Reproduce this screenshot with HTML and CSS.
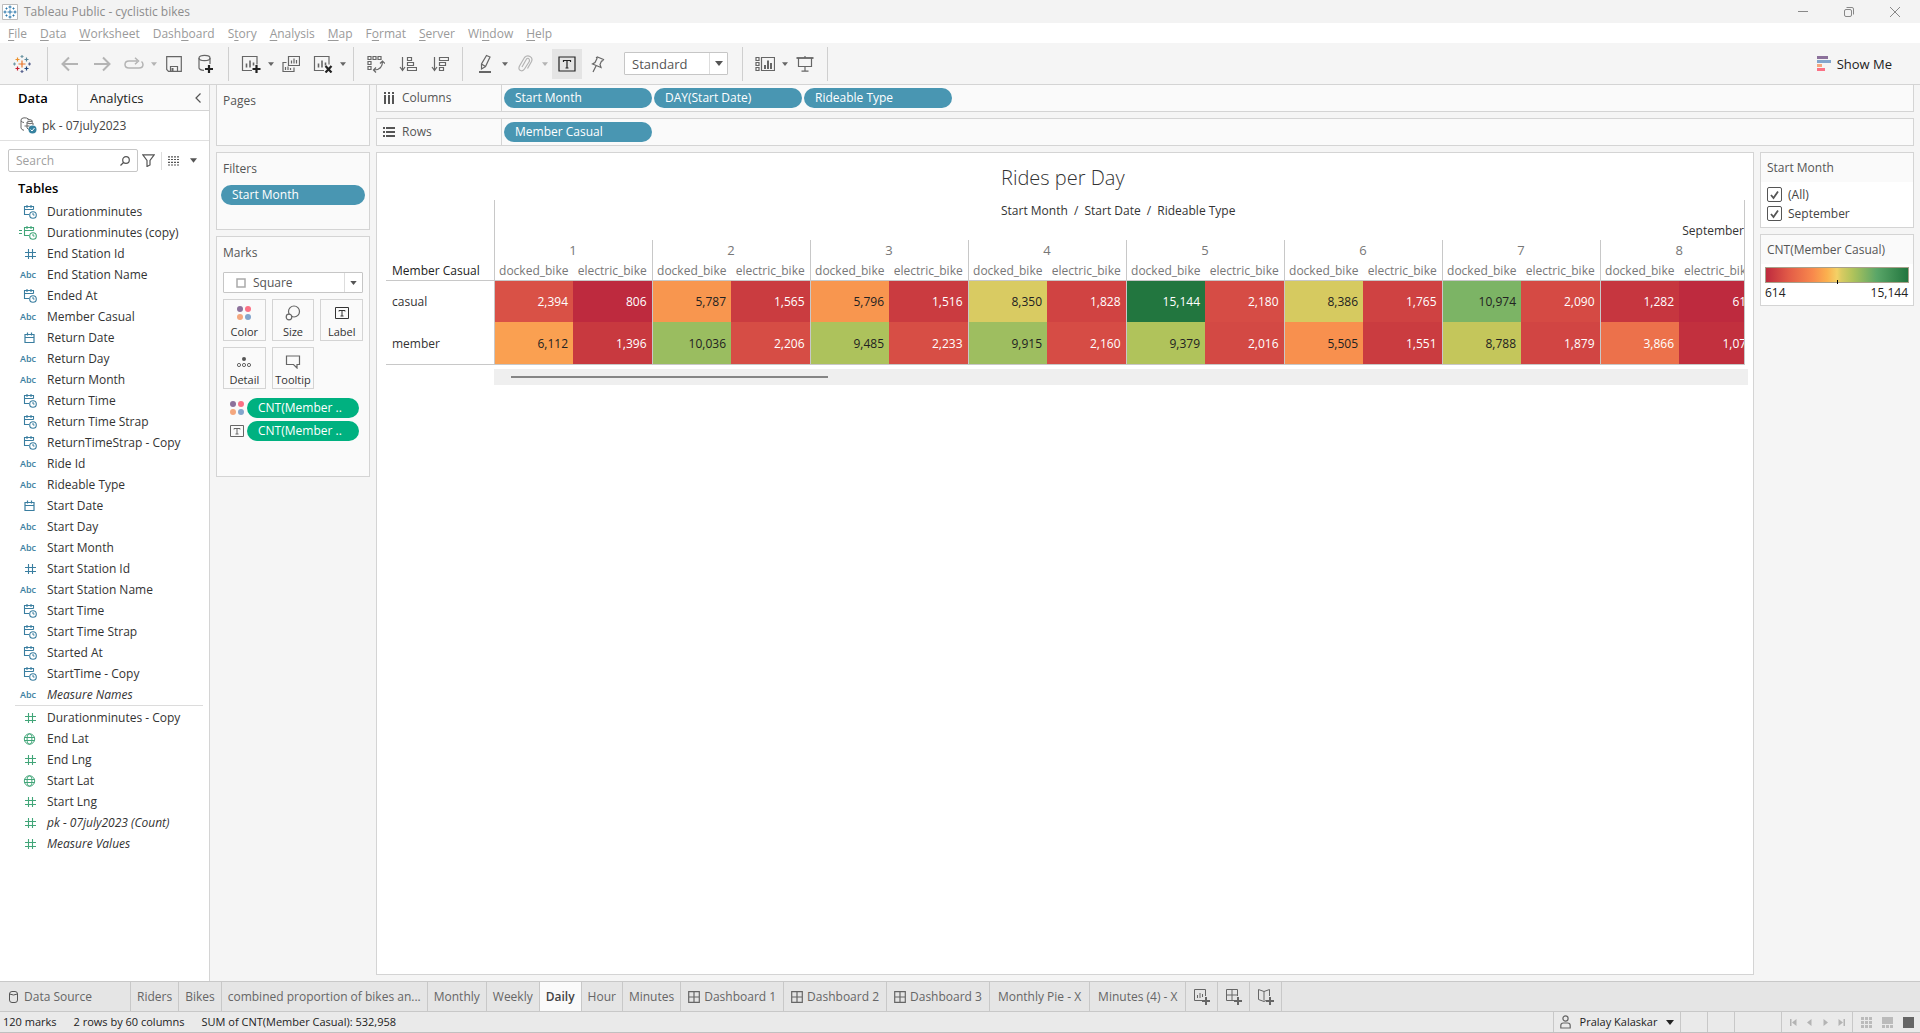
FILE: index.html
```html
<!DOCTYPE html>
<html lang="en">
<head>
<meta charset="utf-8">
<title>Tableau Public - cyclistic bikes</title>
<link rel="stylesheet" href="styles.css">
</head>
<body>
<svg class="sprite" aria-hidden="true">
  <symbol id="caret" viewBox="0 0 8 5"><path d="M0 0h8L4 5z" fill="currentColor"/></symbol>
  <symbol id="cal" viewBox="0 0 14 14"><path d="M2 3.500h9v8h-9zM2 6.500h9M4.500 1.500v3M8.500 1.500v3" fill="none" stroke="currentColor" stroke-width="1.200"/></symbol>
  <symbol id="calclock" viewBox="0 0 14 14"><path d="M6 9.500H1.500v-8h9v3M1.500 4.500h9M4 0v3M8 0v3" fill="none" stroke="currentColor" stroke-width="1.100"/><circle cx="10" cy="10" r="3.300" fill="none" stroke="currentColor" stroke-width="1.100"/><path d="M10 8v2h1.500" fill="none" stroke="currentColor"/></symbol>
  <symbol id="calccal" viewBox="0 0 18 14"><path d="M0 4.500h3M0 7.500h3M10 9.500H5.500v-8h9v3M5.500 4.500h9M8 0v3M12 0v3" fill="none" stroke="currentColor" stroke-width="1.100"/><circle cx="14" cy="10" r="3.300" fill="none" stroke="currentColor" stroke-width="1.100"/><path d="M14 8v2h1.500" fill="none" stroke="currentColor"/></symbol>
  <symbol id="hash" viewBox="0 0 14 14"><path d="M5.500 2v10M9.500 2v10M2 5.500h11M2 9.500h11" fill="none" stroke="currentColor" stroke-width="1.100"/></symbol>
  <symbol id="globe" viewBox="0 0 14 14"><g fill="none" stroke="currentColor"><circle cx="6.500" cy="7" r="5.200"/><ellipse cx="6.500" cy="7" rx="2.400" ry="5.200"/><path d="M1.500 5.500h10M1.500 8.500h10"/></g></symbol>
  <symbol id="dots" viewBox="0 0 16 16"><circle cx="4" cy="4" r="3" fill="#8c719b"/><circle cx="12" cy="4" r="3" fill="#fb7185"/><circle cx="4" cy="12" r="3" fill="#f4a77e"/><circle cx="12" cy="12" r="3" fill="#83a5cc"/></symbol>
  <symbol id="tbox" viewBox="0 0 14 14"><path d="M.5 1.500h13v11H.5zM4 5.500v-1h6v1M7 4.500v5.500M5.500 10h3" fill="none" stroke="currentColor"/></symbol>
  <symbol id="grid" viewBox="0 0 12 12"><path d="M.7.7h10.600v10.600H.7zM6 .7v10.600M.7 6h10.600" fill="none" stroke="currentColor" stroke-width="1.200"/></symbol>
</svg>

<header class="titlebar">
  <svg class="app-icon" viewBox="0 0 16 16"><path d="M.5.500h15v15H.5z" fill="#fff" stroke="#bbb"/><path d="M8 5.500v5M5.500 8h5M8 1.500v3M6.500 3h3M8 11.500v3M6.500 13h3M3 6.500v3M1.500 8h3M13 6.500v3M11.500 8h3M4.500 3.500v2M3.500 4.500h2M11.500 3.500v2M10.500 4.500h2M4.500 10.500v2M3.500 11.500h2M11.500 10.500v2M10.500 11.500h2" stroke="#2b77ab" fill="none"/></svg>
  <span>Tableau Public - cyclistic bikes</span>
  <div class="window-buttons">
    <button aria-label="Minimize"><svg width="12" height="12"><path d="M1 5.500h10" stroke="#888"/></svg></button>
    <button aria-label="Restore"><svg width="12" height="12" fill="none" stroke="#888"><rect x="1.500" y="3.500" width="7" height="7" rx="1.500"/><path d="M3.500 1.500h5.500q1.500 0 1.500 1.500v5.500"/></svg></button>
    <button aria-label="Close"><svg width="12" height="12"><path d="M1 1l10 10M11 1L1 11" stroke="#888"/></svg></button>
  </div>
</header>

<nav class="menubar">
  <a href="#"><u>F</u>ile</a><a href="#"><u>D</u>ata</a><a href="#"><u>W</u>orksheet</a><a href="#">Dash<u>b</u>oard</a><a href="#">S<u>t</u>ory</a><a href="#"><u>A</u>nalysis</a><a href="#"><u>M</u>ap</a><a href="#">F<u>o</u>rmat</a><a href="#"><u>S</u>erver</a><a href="#">Wi<u>n</u>dow</a><a href="#"><u>H</u>elp</a>
</nav>

<div class="toolbar">
  <div class="tools logo">
    <button class="tool" aria-label="Start page"><svg width="18" height="18" fill="none" stroke-width="1.200"><path d="M9 5.500v7M5.500 9h7" stroke="#e8762c"/><path d="M4.500 2.500v4M2.500 4.500h4" stroke="#eb912c"/><path d="M13.500 2.500v4M11.500 4.500h4" stroke="#59879b"/><path d="M4.500 11.500v4M2.500 13.500h4" stroke="#c72035"/><path d="M13.500 11.500v4M11.500 13.500h4" stroke="#1f457e"/><path d="M9 0v3M7.500 1.500h3M1.500 7.500v3M0 9h3" stroke="#7199a6"/><path d="M9 15v3M7.500 16.500h3M16.500 7.500v3M15 9h3" stroke="#5b6591"/></svg></button>
  </div>
  <div class="tools">
    <button class="tool dim" aria-label="Undo"><svg width="18" height="16" fill="none" stroke="currentColor" stroke-width="2"><path d="M17 8H2M8 1.500L1.500 8L8 14.500"/></svg></button>
    <button class="tool dim" aria-label="Redo"><svg width="18" height="16" fill="none" stroke="currentColor" stroke-width="2"><path d="M1 8h15M10 1.500L16.500 8L10 14.500"/></svg></button>
    <button class="tool dim" aria-label="Replay"><svg width="20" height="14" fill="none" stroke="currentColor" stroke-width="1.500"><path d="M13 4H5q-4 0-4 3.500T5 11h10q4 0 4-3.500-.2-2-1.500-3M11 .8L14.500 4L11 7.200"/></svg></button>
    <button class="drop dim" aria-label="Replay options"><svg width="6" height="4"><use href="#caret"/></svg></button>
    <button class="tool" aria-label="Save"><svg width="16" height="16" fill="none" stroke="currentColor" stroke-width="1.200"><path d="M.7.7h14.600v14.600H2.500L.7 13.500zM4.500 15v-4.500h7V15"/><path d="M6.500 12v3" stroke-width="2"/></svg></button>
    <button class="tool" aria-label="New data source"><svg width="18" height="20" fill="none" stroke="currentColor" stroke-width="1.200"><ellipse cx="7.500" cy="4" rx="5.500" ry="2.600"/><path d="M2 4v10q.5 2 5 2.300M13 4v6"/><path d="M8 15h8M12 11v8" stroke="#222" stroke-width="2.200"/></svg></button>
  </div>
  <div class="tools">
    <button class="tool" aria-label="New worksheet"><svg width="20" height="18" fill="none" stroke="currentColor" stroke-width="1.200"><path d="M11 15.500H1.500V1.500h14.500v8"/><path d="M5.500 8.500v4M9 5.500v7M12.500 7.500v3" stroke-width="1.600"/><path d="M11.500 14h8M15.500 10v8" stroke="#222" stroke-width="2.200"/></svg></button>
    <button class="drop" aria-label="Worksheet options"><svg width="6" height="4"><use href="#caret"/></svg></button>
    <button class="tool" aria-label="Duplicate"><svg width="18" height="18" fill="none" stroke="currentColor" stroke-width="1.200"><path d="M6.500 1.500h11v9h-11zM4.500 7.500H1v9h11v-4M9.500 5.500v3M12 3.500v5M14.500 5v3.500M3.500 12v3M6 11.500v3.500M8.500 13v2"/></svg></button>
    <button class="tool" aria-label="Clear sheet"><svg width="20" height="18" fill="none" stroke="currentColor" stroke-width="1.200"><path d="M11 15.500H1.500V1.500h14.500v8"/><path d="M5.500 8.500v4M9 5.500v7M12.500 7.500v3" stroke-width="1.600"/><path d="M12.500 11l6 6.500M18.500 11l-6 6.500" stroke="#222" stroke-width="2.200"/></svg></button>
    <button class="drop" aria-label="Clear options"><svg width="6" height="4"><use href="#caret"/></svg></button>
  </div>
  <div class="tools">
    <button class="tool" aria-label="Swap rows and columns"><svg width="18" height="18" fill="none" stroke="currentColor" stroke-width="1.200"><path d="M1 1.500h3v3H1zM6 1.500h3v3H6zM11 1.500h3v3h-3zM1 6.500h3v3H1zM1 11.500h3v3H1zM7 15q8.500 0 8.500-8.500M13 8.500l2.500-2.500L18 8.500M9 12.500L6.500 15L9 17.500"/></svg></button>
    <button class="tool" aria-label="Sort ascending"><svg width="18" height="16" fill="none" stroke="currentColor" stroke-width="1.200"><path d="M3.500 1v13M1 11l2.500 3.500L6 11M8.500 1.500h4v3h-4zM8.500 6.500h6v3h-6zM8.500 11.500h9v3h-9z"/></svg></button>
    <button class="tool" aria-label="Sort descending"><svg width="18" height="16" fill="none" stroke="currentColor" stroke-width="1.200"><path d="M3.500 1v13M1 11l2.500 3.500L6 11M8.500 1.500h9v3h-9zM8.500 6.500h6v3h-6zM8.500 11.500h4v3h-4z"/></svg></button>
  </div>
  <div class="tools">
    <button class="tool" aria-label="Highlight"><svg width="16" height="20" fill="none" stroke="currentColor" stroke-width="1.200"><path d="M9.500 1.500l3.500 1.500-4.500 9.500-4 2.500v-5zM4.500 10l4 2.500"/><path d="M2 18h12" stroke-width="2"/></svg></button>
    <button class="drop" aria-label="Highlight options"><svg width="6" height="4"><use href="#caret"/></svg></button>
    <button class="tool dim" aria-label="Group members"><svg width="16" height="18" fill="none" stroke="currentColor" stroke-width="1.200"><path d="M5 12l4.500-8q1.500-1.500 2.500 0t0 3L7.500 14q-1.500 2.500-4 1.500t-1-4.500l5-8.500q2.500-2.500 5.500-1t1.500 5l-4 7"/></svg></button>
    <button class="drop dim" aria-label="Group options"><svg width="6" height="4"><use href="#caret"/></svg></button>
    <button class="tool on" aria-label="Show mark labels"><svg width="18" height="16" fill="none" stroke="#222" stroke-width="1.200"><path d="M1 1h16v14H1zM5.500 6V4.500h7V6M9 4.500V12M7.500 12h3"/></svg></button>
    <button class="tool" aria-label="Fix axes"><svg width="14" height="18" fill="none" stroke="currentColor" stroke-width="1.200"><path d="M6.500 2l6 2.500-1 1.500-1 0-1.500 3.500 1 3-8.500-3.500 2.500-1.500 2-4-.5-1zM5 11l-3 6"/></svg></button>
    <label class="combo fit"><select aria-label="Fit"><option>Standard</option></select><span class="combo-arrow"><svg width="8" height="5"><use href="#caret"/></svg></span></label>
  </div>
  <div class="tools">
    <button class="tool" aria-label="Show or hide cards"><svg width="20" height="16" fill="none" stroke="currentColor" stroke-width="1.200"><path d="M1 1.500h3v3H1zM1 6.500h3v3H1zM1 11.500h3v3H1zM6.500 1.500h13v13h-13z"/><path d="M10 9v4M13 4.500V13M16 7v6" stroke-width="2"/></svg></button>
    <button class="drop" aria-label="Card options"><svg width="6" height="4"><use href="#caret"/></svg></button>
    <button class="tool" aria-label="Presentation mode"><svg width="18" height="16" fill="none" stroke="currentColor" stroke-width="1.200"><path d="M9 0v2M2.500 2v8.500h13V2M9 10.500V15M5.500 15.200h7"/><path d="M.5 2h17" stroke-width="1.800"/></svg></button>
  </div>
  <button class="show-me"><svg width="14" height="15"><path d="M0 0h11v3H0z" fill="#8c719b"/><path d="M0 4h14v3H0z" fill="#83a5cc"/><path d="M0 8h5v3H0z" fill="#f4a77e"/><path d="M0 12h8v3H0z" fill="#fb7185"/></svg>Show Me</button>
</div>

<main class="workspace">
  <aside class="data-pane">
    <div class="pane-tabs">
      <button class="pane-tab active">Data</button>
      <button class="pane-tab">Analytics <svg width="6" height="10" fill="none" stroke="#555" stroke-width="1.200"><path d="M5.500.5L1 5l4.500 4.500"/></svg></button>
    </div>
    <div class="source"><svg width="17" height="17" fill="none" stroke="#666"><path d="M9 2.500Q7 .5 4 .8T1 3v8q.5 2 3 2.300M1 4q1.500 1.500 3 1.500M13 5q-3-1.500-6 0v6q1 1.500 3 1.500M7 6q3 1.500 6 0v2M4.500 9h5M7.500 2.800q3-.8 5 1"/><circle cx="12.500" cy="12.500" r="4" fill="#3682a0" stroke="none"/><path d="M10.500 12.500l1.500 1.500 2.500-3" stroke="#fff"/></svg>pk - 07july2023</div>
    <div class="find">
      <label class="search"><input type="text" placeholder="Search" aria-label="Search fields"><svg width="10" height="10" fill="none" stroke="#555" stroke-width="1.200"><circle cx="6" cy="4" r="3.300"/><path d="M3.500 6.500L.5 9.500"/></svg></label>
      <button aria-label="Filter fields"><svg width="13" height="13" fill="none" stroke="#555" stroke-width="1.200"><path d="M.8.800h11.400L8 6.500V11l-3 1.500v-6z"/></svg></button>
      <button class="view-as" aria-label="View as"><svg width="12" height="10" stroke="#555" stroke-width="1.200" stroke-dasharray="2 1"><path d="M0 .8h12M0 3.500h12M0 6.300h12M0 9h12"/></svg></button>
      <button aria-label="View options"><svg width="7" height="5"><use href="#caret"/></svg></button>
    </div>
    <h2>Tables</h2>
    <ul class="fields dims">
      <li><svg><use href="#calclock"/></svg>Durationminutes</li>
      <li class="calc"><svg><use href="#calccal"/></svg>Durationminutes (copy)</li>
      <li><svg><use href="#hash"/></svg>End Station Id</li>
      <li><b>Abc</b>End Station Name</li>
      <li><svg><use href="#calclock"/></svg>Ended At</li>
      <li><b>Abc</b>Member Casual</li>
      <li><svg><use href="#cal"/></svg>Return Date</li>
      <li><b>Abc</b>Return Day</li>
      <li><b>Abc</b>Return Month</li>
      <li><svg><use href="#calclock"/></svg>Return Time</li>
      <li><svg><use href="#calclock"/></svg>Return Time Strap</li>
      <li><svg><use href="#calclock"/></svg>ReturnTimeStrap - Copy</li>
      <li><b>Abc</b>Ride Id</li>
      <li><b>Abc</b>Rideable Type</li>
      <li><svg><use href="#cal"/></svg>Start Date</li>
      <li><b>Abc</b>Start Day</li>
      <li><b>Abc</b>Start Month</li>
      <li><svg><use href="#hash"/></svg>Start Station Id</li>
      <li><b>Abc</b>Start Station Name</li>
      <li><svg><use href="#calclock"/></svg>Start Time</li>
      <li><svg><use href="#calclock"/></svg>Start Time Strap</li>
      <li><svg><use href="#calclock"/></svg>Started At</li>
      <li><svg><use href="#calclock"/></svg>StartTime - Copy</li>
      <li><b>Abc</b><i>Measure Names</i></li>
    </ul>
    <ul class="fields measures">
      <li><svg><use href="#hash"/></svg>Durationminutes - Copy</li>
      <li><svg><use href="#globe"/></svg>End Lat</li>
      <li><svg><use href="#hash"/></svg>End Lng</li>
      <li><svg><use href="#globe"/></svg>Start Lat</li>
      <li><svg><use href="#hash"/></svg>Start Lng</li>
      <li><svg><use href="#hash"/></svg><i>pk - 07july2023 (Count)</i></li>
      <li><svg><use href="#hash"/></svg><i>Measure Values</i></li>
    </ul>
  </aside>

  <div class="cards">
    <section class="card pages"><h3>Pages</h3></section>
    <section class="card filters"><h3>Filters</h3><button class="pill">Start Month</button></section>
    <section class="card marks">
      <h3>Marks</h3>
      <label class="combo mark-type"><svg width="10" height="10"><path d="M1 1h8v8H1z" fill="none" stroke="#aaa" stroke-width="1.500"/></svg><select aria-label="Mark type"><option>Square</option></select><span class="combo-arrow"><svg width="7" height="4"><use href="#caret"/></svg></span></label>
      <div class="mark-buttons">
        <button><svg width="16" height="16"><use href="#dots"/></svg>Color</button>
        <button><svg width="16" height="16" fill="none" stroke="#666" stroke-width="1.200"><circle cx="9" cy="6.500" r="5.500"/><circle cx="4" cy="12" r="2.800" fill="#fafafa"/></svg>Size</button>
        <button><svg width="14" height="16"><use href="#tbox"/></svg>Label</button>
        <button><svg width="16" height="16"><circle cx="8" cy="6" r="2" fill="#555"/><g fill="none" stroke="#666"><circle cx="3" cy="12" r="1.600"/><circle cx="8" cy="12" r="1.600"/><circle cx="13" cy="12" r="1.600"/></g></svg>Detail</button>
        <button><svg width="16" height="16" fill="none" stroke="#666" stroke-width="1.200"><path d="M1.500 3h13v8.500H12V15l-3.500-3.500h-7z"/></svg>Tooltip</button>
      </div>
      <div class="encoding"><svg width="16" height="16"><use href="#dots"/></svg><button class="pill green">CNT(Member ..</button></div>
      <div class="encoding"><svg width="16" height="14"><use href="#tbox"/></svg><button class="pill green">CNT(Member ..</button></div>
    </section>
  </div>

  <div class="sheet">
    <section class="shelf"><h3><svg width="12" height="12" fill="#555"><path d="M1 0h2v2H1zM1 3h2v9H1zM5 0h2v2H5zM5 3h2v9H5zM9 0h2v2H9zM9 3h2v9H9z"/></svg>Columns</h3>
      <button class="pill">Start Month</button><button class="pill">DAY(Start Date)</button><button class="pill">Rideable Type</button></section>
    <section class="shelf"><h3><svg width="12" height="12" fill="#555"><path d="M0 1h2v2H0zM3 1h9v2H3zM0 5h2v2H0zM3 5h9v2H3zM0 9h2v2H0zM3 9h9v2H3z"/></svg>Rows</h3>
      <button class="pill">Member Casual</button></section>
    <div class="canvas">
      <section class="view">
        <h1>Rides per Day</h1>
        <div class="crosstab">
          <div class="field-labels">
            <p class="path">Start Month <span>/</span> Start Date <span>/</span> Rideable Type</p>
            <p class="month">September</p>
          </div>
          <table>
            <colgroup><col class="rowhead"></colgroup>
            <thead>
              <tr class="days"><td></td><th colspan="2">1</th><th colspan="2">2</th><th colspan="2">3</th><th colspan="2">4</th><th colspan="2">5</th><th colspan="2">6</th><th colspan="2">7</th><th colspan="2">8</th></tr>
              <tr class="types"><th>Member Casual</th><th>docked_bike</th><th>electric_bike</th><th>docked_bike</th><th>electric_bike</th><th>docked_bike</th><th>electric_bike</th><th>docked_bike</th><th>electric_bike</th><th>docked_bike</th><th>electric_bike</th><th>docked_bike</th><th>electric_bike</th><th>docked_bike</th><th>electric_bike</th><th>docked_bike</th><th>electric_bike</th></tr>
            </thead>
            <tbody>
              <tr><th>casual</th><td style="background:#d95146">2,394</td><td style="background:#be2a3e">806</td><td class="dark" style="background:#f8964f">5,787</td><td style="background:#ca3c40">1,565</td><td class="dark" style="background:#f8964f">5,796</td><td style="background:#ca3b40">1,516</td><td class="dark" style="background:#d9cb62">8,350</td><td style="background:#d04342">1,828</td><td style="background:#22763f">15,144</td><td style="background:#d64c45">2,180</td><td class="dark" style="background:#d6ca60">8,386</td><td style="background:#cf4242">1,765</td><td class="dark" style="background:#7cb465">10,974</td><td style="background:#d54a44">2,090</td><td style="background:#c6363f">1,282</td><td style="background:#be2a3e">614</td></tr>
              <tr><th>member</th><td class="dark" style="background:#faa051">6,112</td><td style="background:#c8393f">1,396</td><td class="dark" style="background:#9abd60">10,036</td><td style="background:#d64d45">2,206</td><td class="dark" style="background:#adc25c">9,485</td><td style="background:#d74e45">2,233</td><td class="dark" style="background:#9ebe60">9,915</td><td style="background:#d64c45">2,160</td><td class="dark" style="background:#b0c35b">9,379</td><td style="background:#d34944">2,016</td><td class="dark" style="background:#f8904e">5,505</td><td style="background:#ca3c40">1,551</td><td class="dark" style="background:#c4c65b">8,788</td><td style="background:#d14543">1,879</td><td style="background:#ec714b">3,866</td><td style="background:#c2303e">1,078</td></tr>
            </tbody>
          </table>
        </div>
        <div class="scroll-track"><div class="scroll-thumb"></div></div>
      </section>
      <aside class="legends">
        <fieldset class="legend"><h3>Start Month</h3>
          <label><input type="checkbox" checked>(All)</label>
          <label><input type="checkbox" checked>September</label>
        </fieldset>
        <section class="legend"><h3>CNT(Member Casual)</h3>
          <div class="ramp"></div>
          <div class="ramp-ends"><span>614</span><span>15,144</span></div>
        </section>
      </aside>
    </div>
  </div>
</main>

<nav class="sheet-tabs">
  <button class="source-tab"><svg width="9" height="12" fill="none" stroke="#555"><rect x=".5" y=".5" width="8" height="11" rx="2.500"/><path d="M.5 3q4 2 8 0"/></svg>Data Source</button>
  <button>Riders</button>
  <button>Bikes</button>
  <button>combined proportion of bikes an...</button>
  <button>Monthly</button>
  <button>Weekly</button>
  <button class="active">Daily</button>
  <button>Hour</button>
  <button>Minutes</button>
  <button class="board"><svg width="12" height="12"><use href="#grid"/></svg>Dashboard 1</button>
  <button class="board"><svg width="12" height="12"><use href="#grid"/></svg>Dashboard 2</button>
  <button class="board"><svg width="12" height="12"><use href="#grid"/></svg>Dashboard 3</button>
  <button class="roomy">Monthly Pie - X</button>
  <button class="roomy">Minutes (4) - X</button>
  <button class="add" aria-label="New worksheet"><svg width="16" height="16" fill="none" stroke="#666"><path d="M8 11.500H.5V.5h11V7M3.500 6v3M6 4v5M8.500 5v3"/><path d="M8 12h8M12 8v8" stroke-width="2"/></svg></button>
  <button class="add" aria-label="New dashboard"><svg width="16" height="16" fill="none" stroke="#666"><path d="M8 11.500H.5V.5h11V7M6 .5v11M.5 6h11"/><path d="M8 12h8M12 8v8" stroke-width="2"/></svg></button>
  <button class="add" aria-label="New story"><svg width="16" height="16" fill="none" stroke="#666"><path d="M8 11.500L6 12.500.5 10.500V.5L6 2.500 11.500.5V7M6 2.500v9"/><path d="M8 12h8M12 8v8" stroke-width="2"/></svg></button>
</nav>

<footer class="status">
  <span>120 marks</span><span>2 rows by 60 columns</span><span>SUM of CNT(Member Casual): 532,958</span>
  <div class="status-right">
    <button class="user"><svg width="11" height="14" fill="none" stroke="#666" stroke-width="1.200"><circle cx="5.500" cy="3.500" r="2.600"/><path d="M.8 13V10.500q0-2.500 2.500-2.500h4.400q2.500 0 2.500 2.500V13z"/></svg>Pralay Kalaskar<svg width="8" height="5"><use href="#caret"/></svg></button>
    <div class="slot"></div><div class="slot"></div><div class="slot wide"></div>
    <div class="pager">
      <button aria-label="First"><svg width="7" height="7"><path d="M0 0h1.500v7H0zM6.500 0v7L2 3.500z"/></svg></button>
      <button aria-label="Previous"><svg width="7" height="7"><path d="M5.500 0v7L1 3.500z"/></svg></button>
      <button aria-label="Next"><svg width="7" height="7"><path d="M1.500 0v7L6 3.500z"/></svg></button>
      <button aria-label="Last"><svg width="7" height="7"><path d="M5.500 0H7v7H5.500zM.5 0v7L5 3.500z"/></svg></button>
    </div>
    <div class="sorter">
      <button aria-label="Sheet sorter"><svg width="11" height="11"><path d="M0 0h3v3H0zM4 0h3v3H4zM8 0h3v3H8zM0 4h3v3H0zM4 4h3v3H4zM8 4h3v3H8zM0 8h3v3H0zM4 8h3v3H4zM8 8h3v3H8z"/></svg></button>
      <button aria-label="Filmstrip"><svg width="11" height="11"><path d="M0 0h11v7H0zM0 8h3v3H0zM4 8h3v3H4zM8 8h3v3H8z"/></svg></button>
      <button class="on" aria-label="Sheet view"><svg width="11" height="11"><path d="M0 0h11v11H0z"/></svg></button>
    </div>
  </div>
</footer>
</body>
</html>
```
FILE: styles.css
```css
* { box-sizing: border-box; }
body {
  margin: 0;
  min-height: 100vh;
  display: flex;
  flex-direction: column;
  background: #f5f5f5;
  color: #333;
  font: 12px/16px "Open Sans", "Noto Sans", sans-serif;
}
button, input, select { font: inherit; color: inherit; background: none; border: 0; margin: 0; padding: 0; }
button { display: flex; align-items: center; justify-content: center; flex: none; white-space: nowrap; }
h1, h2, h3, p, ul { margin: 0; padding: 0; font-weight: 400; font-size: 12px; }
a { color: inherit; text-decoration: none; }
svg { display: block; flex: none; }
.sprite { position: absolute; width: 0; height: 0; }

.titlebar { display: flex; align-items: center; gap: 6px; height: 23px; padding-left: 2px; background: #f3f3f3; color: #8c8c8c; }
.app-icon { width: 16px; height: 16px; }
.window-buttons { display: flex; margin-left: auto; padding-right: 2px; }
.window-buttons button { width: 46px; height: 20px; }
.menubar { display: flex; align-items: center; gap: 13px; height: 20px; padding: 1px 0 0 8px; background: #fff; color: #9a9a9a; }
.menubar u { text-underline-offset: 2px; }

.toolbar { display: flex; align-items: center; height: 42px; margin-bottom: -1px; color: #666; border-bottom: 1px solid #d4d4d4; }
.tools { display: flex; align-items: center; height: 34px; padding: 0 6px; border-right: 1px solid #cfcfcf; }
.tools.logo { width: 48px; }
.tool { width: 32px; height: 30px; }
.drop { width: 8px; height: 30px; }
.dim { color: #b4b4b4; }
.tool.on { width: 30px; margin-left: 3px; background: #e4e4e4; }
.combo { display: flex; align-items: center; border: 1px solid #c6c6c6; border-radius: 1px; background: #fff; color: #555; }
.combo select { flex: 1; min-width: 0; appearance: none; outline: 0; }
.combo-arrow { display: flex; align-items: center; justify-content: center; align-self: stretch; width: 18px; border-left: 1px solid #ddd; }
.fit { width: 104px; height: 23px; margin: 0 8px 0 10px; padding-left: 7px; font-size: 13px; }
.show-me { margin-left: auto; padding-right: 28px; gap: 6px; font-size: 13px; color: #222; }

.workspace { flex: 1; display: flex; gap: 6px; padding-right: 6px; }
.data-pane { flex: none; width: 210px; background: #fff; border-right: 1px solid #d4d4d4; border-top: 1px solid #d4d4d4; }
.pane-tabs { display: flex; height: 26px; font-size: 13px; color: #222; }
.pane-tab { flex: 1; justify-content: space-between; padding: 0 8px 0 12px; border: solid #d4d4d4; border-width: 0 0 1px 1px; background: #fafafa; }
.pane-tab.active { flex: none; width: 77px; padding: 0 0 0 18px; justify-content: flex-start; border: 0; background: #fff; font-weight: 600; color: #000; }
.source { display: flex; align-items: center; gap: 5px; height: 30px; padding-left: 20px; border-bottom: 1px solid #e0e0e0; color: #444; }
.find { display: flex; align-items: center; padding: 8px 8px 0; gap: 4px; color: #555; }
.search { display: flex; align-items: center; width: 130px; height: 23px; padding: 0 7px; border: 1px solid #c6c6c6; border-radius: 2px; }
.search input { flex: 1; min-width: 0; outline: 0; }
.search input::placeholder { color: #a0a0a0; opacity: 1; }
.view-as { padding: 4px 6px; border-left: 1px solid #ddd; margin-left: 2px; }
.data-pane h2 { margin: 8px 0 5px 18px; font-size: 13px; font-weight: 600; color: #000; }
.fields { list-style: none; padding-left: 16px; }
.fields li { display: flex; align-items: center; height: 21px; padding-left: 7px; }
.fields svg { width: 14px; height: 14px; margin-right: 10px; }
.fields b { width: 20px; margin-left: -3px; margin-right: 7px; font-size: 9px; font-weight: 600; }
.fields .calc { padding-left: 3px; }
.fields .calc svg { width: 18px; }
.dims svg, .dims b { color: #3a7ea0; }
.dims .calc svg, .measures svg { color: #41a578; }
.measures { margin: 0 6px 0 15px; padding: 1px 0 0 1px; border-top: 1px solid #dcdcdc; }

.cards { display: flex; flex-direction: column; gap: 6px; flex: none; width: 154px; }
.card { border: 1px solid #d4d4d4; background: #fafafa; color: #555; }
.card h3 { padding: 7px 6px; line-height: 17px; }
.pages { height: 62px; }
.filters { height: 78px; }
.pill { display: block; height: 20px; border-radius: 10px; padding: 0 11px; background: #4996b2; color: #fff; text-align: left; font-weight: 500; line-height: 20px; }
.filters .pill { width: 144px; margin: 1px 4px; }
.marks { height: 241px; }
.mark-type { height: 21px; margin: 4px 6px 6px; padding-left: 12px; gap: 7px; }
.mark-buttons { display: grid; grid-template-columns: repeat(3, 1fr); gap: 6px; margin: 0 6px 9px; }
.mark-buttons button { flex-direction: column; gap: 3px; height: 42px; padding-top: 5px; border: 1px solid #d4d4d4; }
.mark-buttons button { color: #333; font-size: 11px; }
.encoding { display: flex; align-items: center; gap: 2px; margin: 0 10px 3px 12px; color: #666; }
.pill.green { flex: 1; background: #00b180; }

.sheet { flex: 1; min-width: 0; display: flex; flex-direction: column; gap: 6px; }
.shelf { display: flex; align-items: center; gap: 2px; height: 28px; border: 1px solid #d4d4d4; background: #fafafa; }
.shelf h3 { display: flex; align-items: center; gap: 7px; align-self: stretch; width: 125px; padding-left: 6px; border-right: 1px solid #d4d4d4; color: #555; }
.shelf .pill { width: 148px; }
.canvas { flex: 1; display: flex; gap: 6px; padding-bottom: 6px; }
.view { flex: 1; min-width: 0; border: 1px solid #d4d4d4; background: #fff; }
.view h1 { margin: 12px 0 9px; padding-left: 624px; font-size: 20px; font-weight: 300; line-height: 26px; color: #333; }
.crosstab { margin: 0 8px 0 9px; overflow: hidden; border-right: 1px solid #c8c8c8; }
.field-labels { height: 40px; margin-left: 108px; padding-top: 1px; border-left: 1px solid #c8c8c8; }
.field-labels p { line-height: 20px; font-weight: 500; }
.path { padding-left: 506px; }
.path span { padding: 0 3px; }
.month { text-align: right; }
table { width: 1372px; table-layout: fixed; border-collapse: collapse; }
.rowhead { width: 108px; }
th, td { padding: 0; white-space: nowrap; font-weight: 400; color: #777; }
.days { height: 20px; }
.days th { border-left: 1px solid #c8c8c8; font-size: 13px; }
.types { height: 20px; border-bottom: 1px solid #c8c8c8; }
.types th { padding-top: 2px; }
.types th:first-child { color: #222; font-weight: 500; text-align: left; padding-left: 6px; }
.types th:nth-child(even), tbody td:nth-child(even) { border-left: 1px solid #c8c8c8; }
tbody tr { height: 42px; }
tbody { border-bottom: 1px solid #c8c8c8; }
tbody th { padding: 2px 0 0 6px; text-align: left; font-weight: 500; color: #333; }
tbody td { padding: 2px 5px 0 0; text-align: right; color: #fff; }
tbody td.dark { color: #222; }
.scroll-track { height: 16px; margin: 4px 5px 0 117px; padding: 7px 17px; background: #efefef; }
.scroll-thumb { width: 317px; height: 2px; background: #858585; }

.legends { display: flex; flex-direction: column; gap: 6px; width: 154px; }
.legend { margin: 0; padding: 0 0 4px; min-width: 0; border: 1px solid #d4d4d4; background: #fff; }
.legend h3 { margin-bottom: 3px; padding: 6px; line-height: 17px; background: #fafafa; color: #555; }
.legend label { display: flex; align-items: center; gap: 6px; height: 19px; padding-left: 6px; color: #444; }
.legend input { appearance: none; width: 15px; height: 15px; border: 1px solid #555; border-radius: 2px; background: url("data:image/svg+xml,%3Csvg xmlns='http://www.w3.org/2000/svg' viewBox='0 0 13 13'%3E%3Cpath d='M3 7l2.500 3L10 3.500' fill='none' stroke='%23555' stroke-width='1.800'/%3E%3C/svg%3E"); }
.ramp { height: 16px; margin: 0 4px; border: 1px solid #a8a08a; background: linear-gradient(90deg, #be2a3e, #e25b47 16%, #f8894c 33%, #fbb04e 43%, #f4d166 50%, #d9cb62 53%, #b0c35b 61%, #5aa668 78%, #22763f); }
.ramp::after { content: ""; display: block; width: 1px; height: 4px; margin: 12px auto 0; background: #000; }
.ramp-ends { display: flex; justify-content: space-between; padding: 2px 5px 0 4px; color: #222; }

.sheet-tabs { display: flex; height: 31px; border: solid #c8c8c8; border-width: 1px 0; background: #e5e5e5; color: #666; }
.sheet-tabs button { gap: 4px; padding: 0 6px; border-right: 1px solid #c8c8c8; }
.sheet-tabs .source-tab { width: 131px; justify-content: flex-start; padding-left: 9px; gap: 6px; }
.sheet-tabs .active { background: #fafafa; color: #444; font-weight: 600; }
.sheet-tabs .board { padding: 0 7px; }
.sheet-tabs .roomy { padding: 0 8px; }
.sheet-tabs .add { width: 32px; }
.status { display: flex; align-items: center; gap: 17px; height: 21px; padding-left: 3px; border-bottom: 1px solid #c0c0c0; background: #eaeaea; color: #222; font-size: 11px; }
.status-right { display: flex; align-self: stretch; margin-left: auto; }
.status-right > * { border-left: 1px solid #c8c8c8; }
.user { gap: 9px; width: 127px; }
.slot { width: 27px; }
.slot.wide { width: 47px; }
.pager { display: flex; align-items: center; gap: 9px; width: 71px; padding-left: 8px; fill: #b4b4b4; }
.sorter { display: flex; align-items: center; gap: 10px; width: 68px; padding-left: 8px; fill: #bbb; }
.sorter .on { fill: #666; }
```
